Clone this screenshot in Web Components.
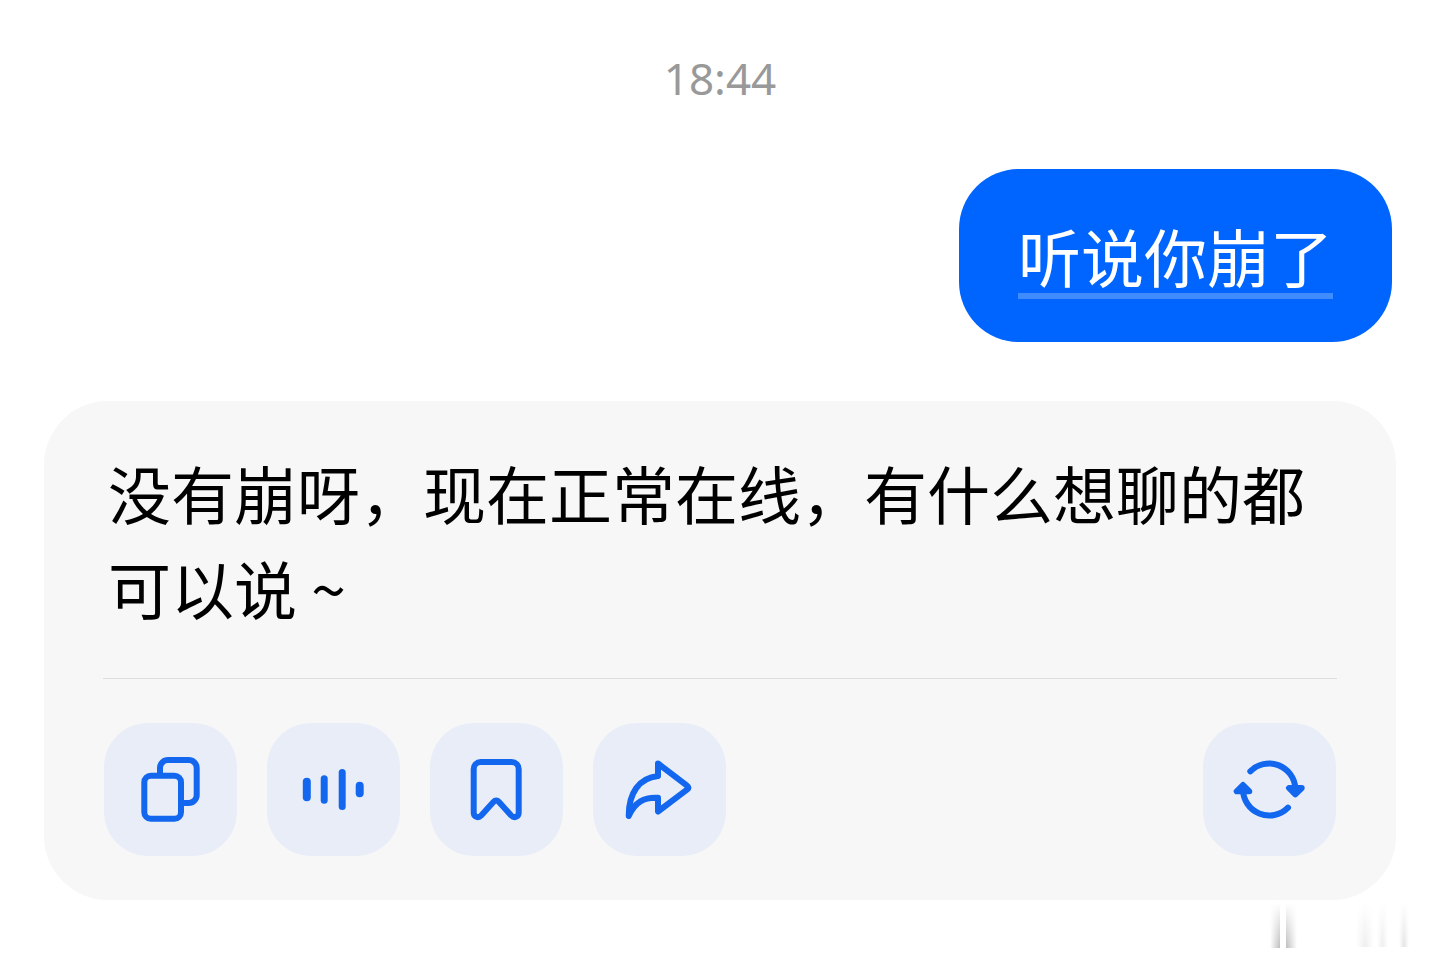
<!DOCTYPE html>
<html lang="zh-CN">
<head>
<meta charset="utf-8">
<meta name="viewport" content="width=device-width, initial-scale=1">
<title>聊天</title>
<style>
  body {
    margin: 0;
    background: #fff;
    font-family: "Noto Sans CJK SC", sans-serif;
  }
</style>
</head>
<body>
<chat-thread>
  <chat-time>18:44</chat-time>
  <user-message>听说你崩了</user-message>
  <reply-card>
    没有崩呀，现在正常在线，有什么想聊的都可以说 ~
    <action-button slot="actions" icon="copy" label="复制"></action-button>
    <action-button slot="actions" icon="voice" label="朗读"></action-button>
    <action-button slot="actions" icon="bookmark" label="收藏"></action-button>
    <action-button slot="actions" icon="share" label="分享"></action-button>
    <action-button slot="retry" icon="refresh" label="重新生成"></action-button>
  </reply-card>
  <corner-mark slot="mark"></corner-mark>
</chat-thread>

<script>
const icons = {
  copy: `
    <rect x="40.3" y="52.7" width="36.7" height="43" rx="6.5"/>
    <path d="M56 52v-7a8 8 0 0 1 8-8h20.7a8 8 0 0 1 8 8v27a8 8 0 0 1-8 8H78"/>`,
  voice: `
    <g fill="currentColor" stroke="none">
      <rect x="35.8" y="54.7" width="8" height="23.6" rx="4"/>
      <rect x="53.7" y="52.3" width="7" height="28.4" rx="3.5"/>
      <rect x="71.7" y="46" width="7" height="41" rx="3.5"/>
      <rect x="88.7" y="58.7" width="8" height="15.6" rx="4"/>
    </g>`,
  bookmark: `
    <path d="M43.7 46a7 7 0 0 1 7-7h31a7 7 0 0 1 7 7v43.5c0 4.5-4.5 6-7.5 3L69 79q-2.8-3-5.6 0L51.2 92.5c-3 3-7.5 1.5-7.5-3z"/>`,
  share: `
    <path d="M65 40.5L94 62.7q3 2 0 4L65 88.5V74.8C51 74 42 79 35.7 93C35.7 70 46 55 65 53z"/>`,
  refresh: `
    <path d="M47.3 48.3A26.3 26.3 0 0 1 92.3 65"/>
    <path d="M85 84.7A26.3 26.3 0 0 1 40 66"/>
    <path fill="currentColor" d="M86 65h12.7l-6.4 6.3zM33.7 68.3h12.6L40 62z"/>`
};

class ChatThread extends HTMLElement {
  constructor() {
    super();
    this.attachShadow({ mode: 'open' });
    this.shadowRoot.innerHTML = `
      <style>
        :host {
          display: block;
          position: relative;
          padding: 46px 44px 63px;
        }
        main {
          display: flex;
          flex-direction: column;
          gap: 59px;
        }
      </style>
      <main><slot></slot></main>
      <slot name="mark"></slot>
    `;
  }
}

class ChatTime extends HTMLElement {
  constructor() {
    super();
    this.attachShadow({ mode: 'open' });
    this.shadowRoot.innerHTML = `
      <style>
        :host {
          display: block;
          color: #999;
          font: 44px/64px "Noto Sans", sans-serif;
          text-align: center;
        }
      </style>
      <time><slot></slot></time>
    `;
  }
}

class UserMessage extends HTMLElement {
  constructor() {
    super();
    this.attachShadow({ mode: 'open' });
    this.shadowRoot.innerHTML = `
      <style>
        :host {
          display: block;
          align-self: flex-end;
          margin-right: 4px;
          padding: 38px 59px 40px;
          border-radius: 60px;
          background: #0065ff;
          color: #fff;
          font-size: 63px;
          line-height: 95px;
        }
        span {
          text-decoration: underline 6px #408cff;
          text-decoration-skip-ink: none;
          text-underline-offset: 11px;
        }
      </style>
      <span><slot></slot></span>
    `;
  }
}

class ReplyCard extends HTMLElement {
  constructor() {
    super();
    this.attachShadow({ mode: 'open' });
    this.shadowRoot.innerHTML = `
      <style>
        :host {
          display: block;
          padding: 43px 59px 44px;
          border-radius: 64px;
          background: #f7f7f7;
          color: #000;
        }
        p {
          margin: 0;
          padding: 0 5px 44px;
          font-size: 63px;
          line-height: 95px;
        }
        footer {
          display: flex;
          justify-content: space-between;
          padding: 44px 1px 0;
          border-top: 1px solid #dedede;
        }
        .actions {
          display: flex;
          gap: 30px;
        }
      </style>
      <p><slot></slot></p>
      <footer>
        <div class="actions"><slot name="actions"></slot></div>
        <slot name="retry"></slot>
      </footer>
    `;
  }
}

class ActionButton extends HTMLElement {
  constructor() {
    super();
    this.attachShadow({ mode: 'open' });
  }

  connectedCallback() {
    this.shadowRoot.innerHTML = `
      <style>
        :host {
          display: block;
        }
        button {
          display: block;
          width: 133px;
          height: 133px;
          padding: 0;
          border: 0;
          border-radius: 44px;
          background: #e8edf8;
          color: #1267ee;
          cursor: pointer;
        }
        svg {
          display: block;
          fill: none;
          stroke: currentColor;
          stroke-width: 6;
          stroke-linecap: round;
          stroke-linejoin: round;
        }
      </style>
      <button type="button" aria-label="${this.getAttribute('label')}">
        <svg viewBox="0 0 133 133" width="133" height="133" aria-hidden="true">
          ${icons[this.getAttribute('icon')]}
        </svg>
      </button>
    `;
  }
}

// faded strokes in the bottom right corner, over the page
class CornerMark extends HTMLElement {
  constructor() {
    super();
    this.attachShadow({ mode: 'open' });
    this.shadowRoot.innerHTML = `
      <style>
        :host {
          display: block;
          position: absolute;
          right: 24px;
          bottom: 14px;
        }
        svg {
          display: block;
        }
      </style>
      <svg width="150" height="46" viewBox="0 0 150 46" aria-hidden="true">
        <defs>
          <linearGradient id="fade" x2="0" y2="1">
            <stop offset="0" stop-color="#000" stop-opacity="0"/>
            <stop offset="1" stop-color="#000" stop-opacity=".26"/>
          </linearGradient>
          <linearGradient id="left"><stop stop-color="#fff" stop-opacity="0"/><stop offset="1" stop-color="#fff"/></linearGradient>
          <linearGradient id="right"><stop stop-color="#fff"/><stop offset="1" stop-color="#fff" stop-opacity="0"/></linearGradient>
          <linearGradient id="middle">
            <stop stop-color="#fff" stop-opacity="0"/>
            <stop offset=".5" stop-color="#fff"/>
            <stop offset="1" stop-color="#fff" stop-opacity="0"/>
          </linearGradient>
          <mask id="in"><rect x="4" width="10" height="46" fill="url(#left)"/></mask>
          <mask id="out"><rect x="20" width="11" height="46" fill="url(#right)"/></mask>
          <mask id="soft">
            <g fill="url(#middle)">
              <rect x="90" width="18" height="46"/>
              <rect x="111" width="11" height="46"/>
              <rect x="133" width="10" height="46"/>
            </g>
          </mask>
        </defs>
        <rect x="4" width="10" height="45" fill="url(#fade)" mask="url(#in)"/>
        <rect x="20" width="11" height="45" fill="url(#fade)" mask="url(#out)"/>
        <g fill="url(#fade)" mask="url(#soft)">
          <rect x="90" width="18" height="44" opacity=".25"/>
          <rect x="111" width="11" height="44" opacity=".25"/>
          <rect x="133" width="10" height="44" opacity=".4"/>
        </g>
      </svg>
    `;
  }
}

customElements.define('chat-thread', ChatThread);
customElements.define('chat-time', ChatTime);
customElements.define('user-message', UserMessage);
customElements.define('reply-card', ReplyCard);
customElements.define('action-button', ActionButton);
customElements.define('corner-mark', CornerMark);
</script>
</body>
</html>
